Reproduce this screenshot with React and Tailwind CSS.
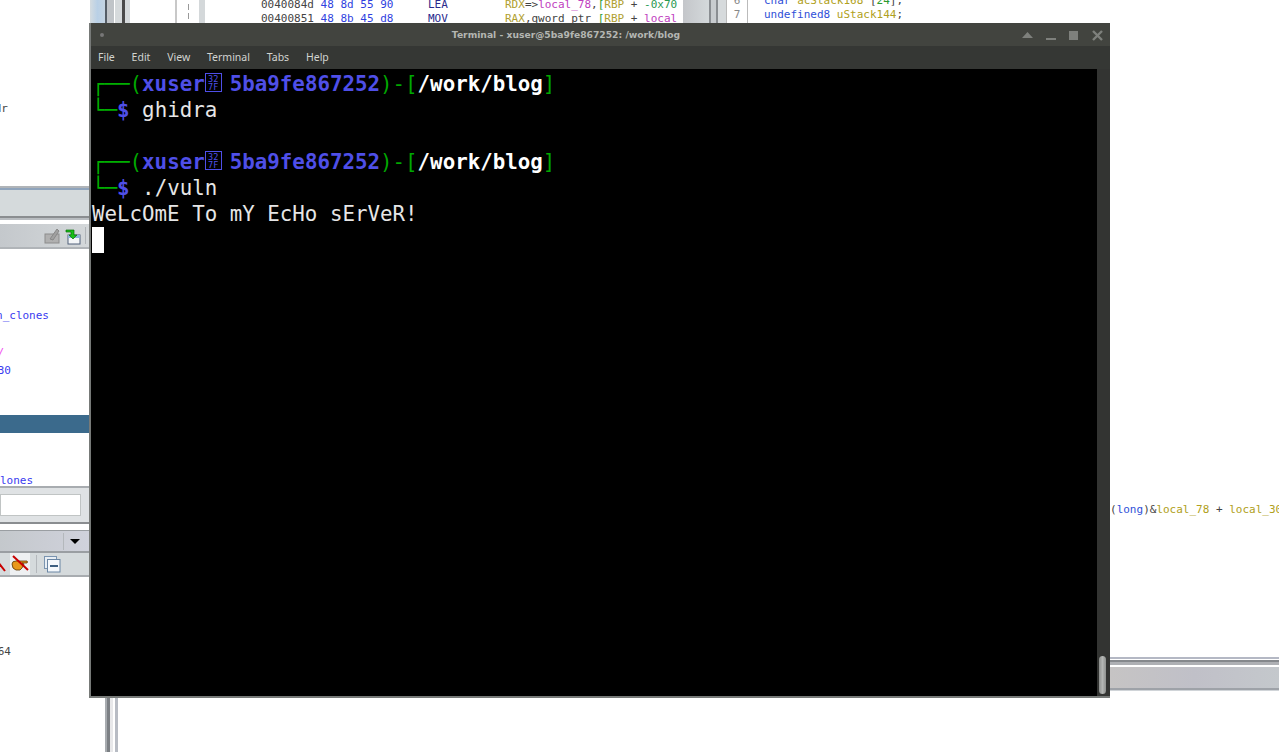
const mono = "font-['DejaVu_Sans_Mono',monospace]";
const olive = "text-[#b0a020]";
const navy = "text-[#3050d8]";

// a label from the tree pane, cut off by the left edge of the screen
function ClippedLabel({ width, height = "h-[15px]", color, children }) {
  return (
    <div className={`${width} ${height} ${color} flex justify-end whitespace-pre leading-[15px]`}>
      {children}
    </div>
  );
}

function LeftToolbarIcons() {
  return (
    <div className="h-[23px] flex items-center justify-end pr-[4px] gap-[4px] bg-gradient-to-r from-[#c4c8cc] to-[#d4d8da]">
      <svg width="17" height="17" viewBox="0 0 17 17">
        <rect x="1" y="7" width="14" height="9" fill="#b0b0b0" stroke="#8c8c8c" />
        <path d="M6 12 L13 2 L15 4 L9 13 Z" fill="#a0a0a0" stroke="#888" />
      </svg>
      <svg width="16" height="18" viewBox="0 0 16 18">
        <rect x="3" y="8" width="12" height="9" fill="#f4f6f8" stroke="#50607a" />
        <rect x="3" y="8" width="12" height="3" fill="#8eb4d8" />
        <path d="M1 3 H9 V8 H12 L8 12 L4 8 H6 V5 H1 Z" fill="#18c018" stroke="#0a700a" strokeWidth="0.7" />
      </svg>
      <div className="w-px h-[17px] bg-[#b0b4b8]" />
    </div>
  );
}

function FilterToolbar() {
  return (
    <div className="h-[22px] flex items-center bg-[#d5dadc]">
      <svg className="w-[6px] mr-[4px]" width="6" height="17" viewBox="0 0 6 17">
        <path d="M-2 6 L5 15" stroke="#c80000" strokeWidth="2" />
      </svg>
      <div className="w-[20px] h-[22px] flex items-center justify-center bg-[#eef0f2]">
        <svg width="18" height="18" viewBox="0 0 18 18">
          <path d="M1 9 Q1 6 5 6 L8 6 L16 6 Q17 7 16 8 L11 8 L13 9 L12 11 L11 13 L9 15 L5 15 Q1 14 1 9 Z" fill="#e8981c" stroke="#5a3808" strokeWidth="0.8" />
          <path d="M2 1 L17 15" stroke="#c80000" strokeWidth="2" />
        </svg>
      </div>
      <div className="w-px h-[18px] bg-[#b4b8bc] ml-[6px] mr-[7px]" />
      <svg width="17" height="17" viewBox="0 0 17 17">
        <rect x="0.5" y="0.5" width="12" height="12" fill="#e8eef4" stroke="#7a94b0" />
        <rect x="3.5" y="3.5" width="12.5" height="12.5" fill="#f4f8fc" stroke="#6a86a4" />
        <rect x="6" y="9" width="8" height="2" fill="#3c5f82" />
      </svg>
    </div>
  );
}

function LeftPane() {
  return (
    <div className={`${mono} absolute left-0 top-0 w-[90px] h-[752px] flex flex-col overflow-hidden text-[11px]`}>
      <div className="h-[101px]" />
      <ClippedLabel width="w-[8px]" color="text-[#444]">dr</ClippedLabel>
      <div className="h-[70px]" />
      <div className="h-[2px] bg-[#b0b4b8]" />
      <div className="h-[28px] bg-[#d5dadc] border-t-2 border-[#8fa4bc]" />
      <div className="h-[2px] bg-[#8a8d90]" />
      <div className="h-[2px] bg-[#b8bcc0]" />
      <div className="h-[4px]" />
      <LeftToolbarIcons />
      <div className="h-[2px] bg-[#b0b4b8]" />
      <div className="h-[59px]" />
      <ClippedLabel width="w-[49px]" color="text-[#3a3af0]">fun_clones</ClippedLabel>
      <div className="h-[22px]" />
      <ClippedLabel width="w-[4px]" color="text-[#f050f0]">/</ClippedLabel>
      <div className="h-[3px]" />
      <ClippedLabel width="w-[11px]" color="text-[#3a3af0]">30</ClippedLabel>
      <div className="h-[37px]" />
      <div className="h-[18px] bg-[#3b6a8c]" />
      <div className="h-[40px]" />
      <ClippedLabel width="w-[33px]" height="h-[13px]" color="text-[#3a3af0]">_clones</ClippedLabel>
      <div className="h-[2px] bg-[#a8acb0]" />
      <div className="h-[34px] flex items-center bg-[#dfe2e4]">
        <div className="w-[81px] h-[22px] bg-white border border-[#c0c4c4]" />
      </div>
      <div className="h-[2px] bg-[#8a8d90]" />
      <div className="h-[6px]" />
      <div className="h-[23px] flex items-center justify-end pr-[10px] gap-[6px] bg-gradient-to-r from-[#c4c8cc] to-[#d0d2dc] border-t border-b-2 border-[#9a9ea2]">
        <div className="w-px h-[17px] bg-[#b4b8bc]" />
        <div className="border-x-[5px] border-t-[5px] border-x-transparent border-t-black" />
      </div>
      <FilterToolbar />
      <div className="h-[2px] bg-[#a8acb0]" />
      <div className="h-[67px]" />
      <ClippedLabel width="w-[11px]" color="text-[#444]">64</ClippedLabel>
    </div>
  );
}

// the part of the ghidra code browser that shows above the terminal
function TopStrip() {
  return (
    <div className={`${mono} absolute left-[90px] top-0 h-[23px] flex text-[11px] leading-[14px] overflow-hidden`}>
      <div className="w-[15px] bg-gradient-to-r from-[#d5dce0] via-[#b9d0e6] to-[#c4d4e2]" />
      <div className="w-[2px] bg-[#555d66]" />
      <div className="w-[7px] mr-px bg-[#c0c4c8]" />
      <div className="w-[7px] bg-[#d6dadc]" />
      <div className="w-[3px] bg-[#4a4a4a]" />
      <div className="w-[5px] bg-[#d6dadc]" />
      <div className="w-[45px]" />
      <div className="w-[2px] bg-[#c8c8c8]" />
      <div className="w-[22px] flex flex-col items-center pt-[4px] pr-[0px] gap-[3px]">
        <div className="w-px h-[6px] bg-[#999]" />
        <div className="w-px h-[6px] bg-[#999]" />
      </div>
      <div className="w-[6px] bg-[#d4d8da]" />

      <div className="w-[478px] pl-[56px] -mt-[2px] grid grid-cols-[167px_77px_1fr] auto-rows-[14px] whitespace-pre text-[#444] overflow-hidden">
        <div>0040084d <span className="text-[#2f3fe0]">48 8d 55 90</span></div>
        <div className="text-[#2a2a8c]">LEA</div>
        <div>
          <span className="text-[#b0a030]">RDX</span>=&gt;<span className="text-[#c040c0]">local_78</span>,<span className="text-[#2a9a30]">[</span><span className="text-[#b0a030]">RBP</span> + <span className="text-[#2a9a50]">-0x70</span>
        </div>
        <div>00400851 <span className="text-[#2f3fe0]">48 8b 45 d8</span></div>
        <div className="text-[#2a2a8c]">MOV</div>
        <div>
          <span className="text-[#b0a030]">RAX</span>,qword ptr <span className="text-[#2a9a30]">[</span><span className="text-[#b0a030]">RBP</span> + <span className="text-[#c040c0]">local</span>
        </div>
      </div>

      <div className="w-[26px] bg-gradient-to-r from-[#c4c6ca] to-[#d4d9db]" />
      <div className="w-[2px] bg-[#8a8e92]" />
      <div className="w-[5px] bg-[#c8cccf]" />
      <div className="w-[2px] bg-[#8a8e92]" />
      <div className="w-[8px] bg-[#d6dadc]" />

      <div className="w-[22px] -mt-[6px] pt-0 border-x border-[#bbb] text-center text-[#888]">
        <div>6</div>
        <div>7</div>
      </div>
      <div className="pl-[16px] -mt-[6px] whitespace-pre text-[#444]">
        <div>
          <span className={navy}>char</span> <span className={olive}>acStack168</span> [<span className="text-[#2a9a30]">24</span>];
        </div>
        <div>
          <span className={navy}>undefined8</span> <span className={olive}>uStack144</span>;
        </div>
      </div>
    </div>
  );
}

function RightPane() {
  return (
    <div className={`${mono} absolute left-[1110px] top-[502px] w-[169px] flex flex-col overflow-hidden text-[11px]`}>
      <div className="h-[15px] leading-[15px] whitespace-pre text-[#444]">
        (<span className={navy}>long</span>)&amp;<span className={olive}>local_78</span> + <span className={olive}>local_30</span>
      </div>
      <div className="h-[140px]" />
      <div className="h-[2px] mb-px bg-[#b4b8c4]" />
      <div className="h-[2px] bg-[#85888c]" />
      <div className="h-[3px] mb-[2px] bg-[#aeb0b4]" />
      <div className="h-[23px] bg-gradient-to-r from-[#c6c4c4] via-[#c0c0c8] to-[#c4c8cc] border-b-2 border-[#9ea2a8]" />
      <div className="h-px bg-[#d0d4d8]" />
    </div>
  );
}

function BottomStrip() {
  return (
    <div className="absolute left-[105px] top-[698px] h-[54px] flex">
      <div className="w-[2px] bg-[#a8acb0]" />
      <div className="w-[3px] bg-[#7c8084]" />
      <div className="w-[3px] mr-[2px] bg-[#e8e8ea]" />
      <div className="w-[3px] bg-[#b8bcc4]" />
    </div>
  );
}

// the font has no glyph for U+327F, so the terminal draws its hex box
function MissingGlyph() {
  return (
    <span className="inline-block align-top mt-[2px] -mr-[4.46px] w-[17px] h-[19px] pt-px border border-[#4f4fe8] text-[#4f4fe8] font-['DejaVu_Sans_Mono',monospace] text-[8.5px] leading-[8px] text-center">
      <span className="block">32</span>
      <span className="block">7F</span>
    </span>
  );
}

function Prompt({ cmd }) {
  return (
    <>
      <div className="whitespace-pre">
        <span className="text-[#00b000] font-bold">┌──</span>
        <span className="text-[#00a800]">(</span>
        <span className="text-[#4f4fe8] font-bold">xuser</span>
        <MissingGlyph />
        <span className="text-[#4f4fe8] font-bold"> 5ba9fe867252</span>
        <span className="text-[#00a800]">)-[</span>
        <span className="text-white font-bold">/work/blog</span>
        <span className="text-[#00a800]">]</span>
      </div>
      <div className="whitespace-pre">
        <span className="text-[#00b000] font-bold">└─</span>
        <span className="text-[#4f4fe8] font-bold">$</span> {cmd}
      </div>
    </>
  );
}

function WindowControls() {
  return (
    <svg className="mr-[6px]" width="82" height="12" viewBox="0 0 82 12" fill="#7e807c">
      <path d="M0 9 L5.5 3 L11 9 Z" />
      <rect x="24" y="9" width="10" height="2" />
      <rect x="47" y="2" width="9" height="9" />
      <path d="M71 2 L80 11 M80 2 L71 11" stroke="#7e807c" strokeWidth="2.4" />
    </svg>
  );
}

function Terminal() {
  return (
    <div className="absolute left-[89px] top-[23px] w-[1021px] h-[675px] flex flex-col bg-[#3a3c39] border-l-2 border-b-2 border-[#777a78]">
      <div className="h-[23px] shrink-0 flex items-center justify-between bg-[#42443f] pl-[9px]">
        <div className="w-[4px] h-[4px] rounded-full bg-[#777]" />
        <div className="ml-[6px] text-[#b4b6b2] text-[9.2px] font-bold font-['DejaVu_Sans',sans-serif]">
          Terminal - xuser@5ba9fe867252: /work/blog
        </div>
        <WindowControls />
      </div>
      <div className="h-[23px] shrink-0 flex items-center gap-[16.8px] pl-[7px] bg-[#353734] text-[#d2d4d0] text-[10.5px] font-['Noto_Sans',sans-serif]">
        <span>File</span>
        <span>Edit</span>
        <span>View</span>
        <span>Terminal</span>
        <span>Tabs</span>
        <span>Help</span>
      </div>
      <div className="flex-1 flex min-h-0">
        <div className={`flex-1 bg-black text-[#e6e6e6] text-[20.8px] leading-[26px] pl-[1px] pt-[2px] ${mono}`}>
          <Prompt cmd="ghidra" />
          <div className="h-[26px]" />
          <Prompt cmd="./vuln" />
          <div className="whitespace-pre">WeLcOmE To mY EcHo sErVeR!</div>
          <div className="w-[12px] h-[26px] bg-white" />
        </div>
        <div className="w-[13px] flex items-end pl-[2px] pb-[2px] bg-[#333432]">
          <div className="w-[7px] h-[38px] rounded-full bg-gradient-to-r from-[#8e908e] via-[#b4b6b4] to-[#8e908e]" />
        </div>
      </div>
    </div>
  );
}

export default function App() {
  return (
    <div className="relative w-[1279px] h-[752px] overflow-hidden bg-white">
      <LeftPane />
      <TopStrip />
      <RightPane />
      <BottomStrip />
      <Terminal />
    </div>
  );
}
